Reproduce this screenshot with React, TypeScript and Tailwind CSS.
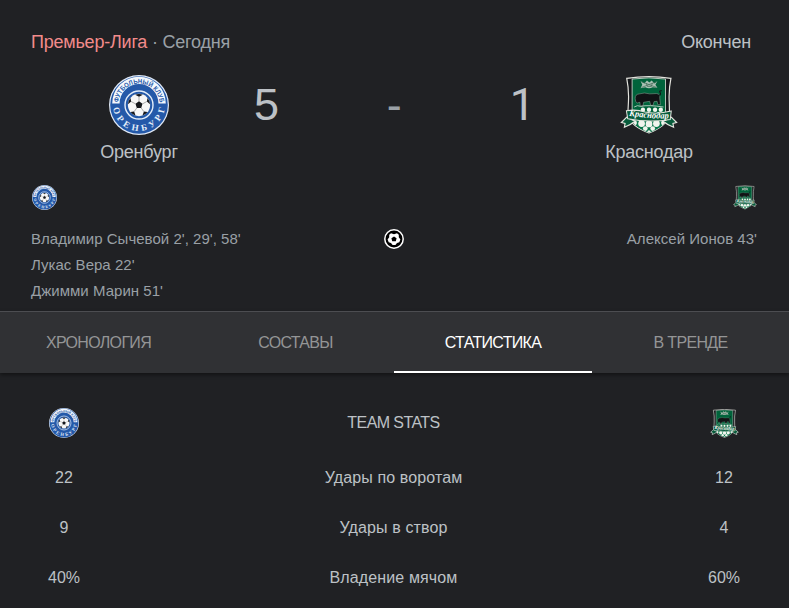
import { useId } from "react";
import clsx from "clsx";

type CrestProps = {
  className?: string;
};

type Stat = {
  label: string;
  home: string;
  away: string;
};

const homeGoals = [
  "Владимир Сычевой 2', 29', 58'",
  "Лукас Вера 22'",
  "Джимми Марин 51'",
];

const awayGoals = ["Алексей Ионов 43'"];

const tabs = ["Хронология", "Составы", "Статистика", "В тренде"];

const stats: Stat[] = [
  { label: "Удары по воротам", home: "22", away: "12" },
  { label: "Удары в створ", home: "9", away: "4" },
  { label: "Владение мячом", home: "40%", away: "60%" },
];

function OrenburgCrest({ className }: CrestProps) {
  const id = useId();

  return (
    <svg viewBox="0 0 60 60" className={className}>
      <defs>
        <path id={`${id}top`} d="M9.2 29.5 A20.8 20.8 0 0 1 50.8 29.5" />
        <path id={`${id}bottom`} d="M4 30 A26 26 0 0 0 56 30" />
      </defs>
      <circle cx="30" cy="30" r="30" fill="#dfe8f5" />
      <circle cx="30" cy="30" r="28.8" fill="#2459a9" />
      <path
        d="M3.2 28.5 A26.8 26.8 0 0 1 56.8 28.5 L49.4 28.5 A19.4 19.4 0 0 0 10.6 28.5 Z"
        fill="#f4f8fd"
      />
      <text
        fontSize="6.8"
        fontWeight="bold"
        fill="#2459a9"
        fontFamily="Liberation Sans, Arial, sans-serif"
        textAnchor="middle"
      >
        <textPath
          href={`#${id}top`}
          startOffset="50%"
          textLength="61"
          lengthAdjust="spacingAndGlyphs"
        >
          ФУТБОЛЬНЫЙ КЛУБ
        </textPath>
      </text>
      <text
        fontSize="9"
        fontWeight="bold"
        fill="#e3edf9"
        fontFamily="Liberation Serif, serif"
        textAnchor="middle"
      >
        <textPath href={`#${id}bottom`} startOffset="50%" textLength="75">
          ОРЕНБУРГ
        </textPath>
      </text>
      <circle cx="30" cy="30" r="14" fill="#2459a9" stroke="#e3edf9" strokeWidth="1.4" />
      <g transform="translate(30 30) scale(0.87) translate(-30 -30)">
        <circle cx="30" cy="30" r="12.8" fill="#f7f7f7" />
        <g fill="#15171b">
          <path d="M30 25.8 L34 28.7 L32.5 33.4 H27.5 L26 28.7 Z" />
          <path d="M25.6 18.2 Q30 16.4 34.4 18.2 L30 20.6 Z" />
          <path d="M39.8 22 Q42.5 25.2 42.7 29 L39 26 Z" />
          <path d="M20.2 22 Q17.5 25.2 17.3 29 L21 26 Z" />
          <path d="M39.8 38 Q37.4 41 34 42.2 L35.6 37.6 Z" />
          <path d="M20.2 38 Q22.6 41 26 42.2 L24.4 37.6 Z" />
        </g>
        <path
          d="M30 20.6 V26 M34 28.7 L39 26 M32.5 33.4 L35.6 37.6 M27.5 33.4 L24.4 37.6 M26 28.7 L21 26"
          stroke="#777"
          strokeWidth="0.7"
        />
      </g>
    </svg>
  );
}

function KrasnodarCrest({ className }: CrestProps) {
  const id = useId();

  return (
    <svg viewBox="0 0 172 170" className={className}>
      <defs>
        <path id={`${id}ribbon`} d="M22 116 Q80 126 150 125" />
        <clipPath id={`${id}balls`}>
          <path d="M30 118 H142 Q134 150 86 167 Q38 150 30 118 Z" />
        </clipPath>
      </defs>
      {/* shield */}
      <path
        d="M20 6 Q86 -4 151 6 Q144 40 146 76 L147 116 Q138 148 86 168 Q32 148 23 116 L25 76 Q27 40 20 6 Z"
        fill="#14171a"
        stroke="#e4e4de"
        strokeWidth="3.5"
      />
      <path
        d="M36 8 Q86 1 135 8 V112 H36 Z"
        fill="#00633b"
        stroke="#d5dbd3"
        strokeWidth="2.5"
      />
      {/* crown and flags */}
      <path
        d="M61 14 L72 21 L80 12 L87 18 L94 12 L102 21 L111 14 L105 25 L111 34 L97 32 Q86 38 75 32 L61 35 L66 25 Z"
        fill="#a9c0b3"
      />
      <path
        d="M64 16 L108 33 M108 16 L64 33 M78 20 L81 30 H93 L96 20"
        stroke="#3d6753"
        strokeWidth="2"
        fill="none"
      />
      {/* bull */}
      <path
        d="M45 66 Q44 53 58 52 Q72 47 88 52 L108 51 Q120 52 118 65 L120 84 H112 L110 74 L101 75 L98 86 H91 L88 74 L70 77 L68 88 H60 L59 77 L51 79 Q45 77 45 66 Z"
        fill="#111315"
        stroke="#8fae9e"
        strokeWidth="1.5"
      />
      <path
        d="M115 57 Q124 54 118 47 Q116 42 124 43"
        fill="none"
        stroke="#111315"
        strokeWidth="3"
      />
      <path d="M42 91 Q52 84 61 89 Q85 84 129 91" fill="none" stroke="#cad8ce" strokeWidth="2.5" />
      {/* ball rows */}
      <g clipPath={`url(#${id}balls)`}>
        <rect x="25" y="110" width="125" height="60" fill="#08754a" />
        <g fill="#f2f5ee">
          <circle cx="42" cy="138" r="8" />
          <circle cx="64" cy="140" r="10" />
          <circle cx="86" cy="141" r="10" />
          <circle cx="108" cy="140" r="10" />
          <circle cx="130" cy="138" r="8" />
          <circle cx="75" cy="155" r="7" />
          <circle cx="97" cy="155" r="7" />
          <circle cx="86" cy="165" r="5" />
        </g>
      </g>
      <g fill="#f2f5ee">
        <circle cx="68" cy="99" r="6.5" />
        <circle cx="86" cy="99" r="6.5" />
        <circle cx="104" cy="99" r="6.5" />
        <circle cx="121" cy="99" r="6.5" />
      </g>
      {/* ribbon */}
      <path
        d="M20 121 L4 137 L15 140 L13 151 Q30 145 44 133 Z M152 121 L168 137 L157 140 L159 151 Q142 145 128 133 Z"
        fill="#075b3b"
        stroke="#e4e4de"
        strokeWidth="3.5"
      />
      <path
        d="M19 102 Q50 97 74 106 Q110 114 152 103 L149 128 Q86 138 23 126 Z"
        fill="#075b3b"
        stroke="#e4e4de"
        strokeWidth="3"
      />
      <text
        fontSize="27"
        fontStyle="italic"
        fontWeight="bold"
        fill="#fff"
        fontFamily="Liberation Serif, serif"
        textAnchor="middle"
      >
        <textPath
          href={`#${id}ribbon`}
          startOffset="50%"
          textLength="118"
          lengthAdjust="spacingAndGlyphs"
        >
          Краснодар
        </textPath>
      </text>
    </svg>
  );
}

function GoalIcon() {
  return (
    <svg viewBox="0 0 20 20" className="size-5">
      <circle cx="10" cy="10" r="9.2" fill="#000" stroke="#fff" strokeWidth="1.5" />
      <path
        d="M7 4.2 L10 5.2 L13 4.2 L14.8 5.8 L14.8 8.2 L16.4 10.4 L15.3 13.3 L13 13.9 L11.4 15.9 H8.6 L7 13.9 L4.7 13.3 L3.6 10.4 L5.2 8.2 L5.2 5.8 Z"
        fill="#fff"
      />
      <path d="M10 7.4 L12.6 9.2 L11.8 12.2 H8.2 L7.4 9.2 Z" fill="#000" />
    </svg>
  );
}

export default function App() {
  return (
    <div className="flex h-[608px] w-[789px] flex-col overflow-hidden bg-[#202124] font-['Liberation_Sans',Arial,sans-serif] text-[#bdc1c6]">
      <header className="flex h-[311px] shrink-0 flex-col">
        <div className="flex justify-between pt-[30px] pr-[38px] pl-[31px] text-[18px] leading-6 tracking-[-0.22px]">
          <div className="text-[#9aa0a6]">
            <span className="text-[#f28b8b]">Премьер-Лига</span> · Сегодня
          </div>
          <div>Окончен</div>
        </div>

        <div className="flex pt-[21px]">
          <div className="flex w-[216px] flex-col items-center pl-[62px]">
            <OrenburgCrest className="size-[60px]" />
            <div className="mt-[5px] text-[18px] leading-6 tracking-[-0.22px]">Оренбург</div>
          </div>
          <div className="flex h-[58px] w-[357px] items-center justify-between px-[38px] text-[45px] leading-none">
            <span>5</span>
            <span className="text-[#9aa0a6]">-</span>
            <span className="font-['Roboto',sans-serif]">1</span>
          </div>
          <div className="flex w-[152px] flex-col items-center">
            <KrasnodarCrest className="mt-[1px] h-[58px] w-[58px]" />
            <div className="mt-[6px] text-[18px] leading-6 tracking-[-0.22px]">Краснодар</div>
          </div>
        </div>

        <div className="flex justify-between pt-[21px] pr-8 pl-8">
          <OrenburgCrest className="size-[25px]" />
          <KrasnodarCrest className="h-[25px] w-6" />
        </div>

        <div className="grid grid-cols-[1fr_20px_1fr] pt-4 pr-8 pl-[31px] text-[15px] leading-[26px] text-[#9aa0a6]">
          <div className="tracking-[0.03px]">
            {homeGoals.map((goal) => (
              <div key={goal}>{goal}</div>
            ))}
          </div>
          <div className="pt-[3px]">
            <GoalIcon />
          </div>
          <div className="text-right tracking-[0.03px]">
            {awayGoals.map((goal) => (
              <div key={goal}>{goal}</div>
            ))}
          </div>
        </div>
      </header>

      <nav className="grid h-[62px] shrink-0 grid-cols-[197px_197px_198px_197px] border-t border-[#4c4d51] bg-[#303134] text-[16px] tracking-[-0.68px] shadow-[0_2px_4px_rgba(0,0,0,0.45)]">
        {tabs.map((tab) => (
          <button
            key={tab}
            className={clsx(
              "border-b-2 pt-[2px]",
              tab === "Статистика"
                ? "border-white text-white"
                : "border-transparent text-[#949596]",
            )}
          >
            {tab.toUpperCase()}
          </button>
        ))}
      </nav>

      <section className="flex flex-col pt-[25px] text-[16px]">
        <div className="grid h-[50px] grid-cols-[128px_1fr_130px] items-center text-center">
          <OrenburgCrest className="size-[30px] justify-self-center" />
          <div className="tracking-[-0.58px]">TEAM STATS</div>
          <KrasnodarCrest className="size-[29px] justify-self-center" />
        </div>
        <div className="pt-[5px]">
          {stats.map((stat) => (
            <div
              key={stat.label}
              className="grid h-[50px] grid-cols-[128px_1fr_130px] items-center text-center"
            >
              <div>{stat.home}</div>
              <div className="tracking-[0.12px]">{stat.label}</div>
              <div>{stat.away}</div>
            </div>
          ))}
        </div>
      </section>
    </div>
  );
}
